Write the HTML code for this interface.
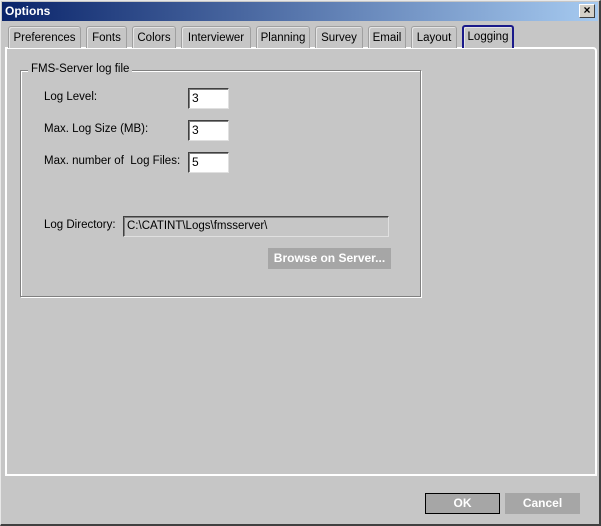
<!DOCTYPE html>
<html><head><meta charset="utf-8"><style>
*{margin:0;padding:0;box-sizing:border-box}
body{width:601px;height:526px;background:#c6c6c6;font-family:"Liberation Sans",sans-serif;font-size:11px;color:#000;position:relative;overflow:hidden}
.a{position:absolute}
#win{left:0;top:0;width:601px;height:526px;border-left:1px solid #e8e8e8;border-top:1px solid #e8e8e8;border-right:2px solid #404040;border-bottom:2px solid #404040}
#title{left:2px;top:2px;width:596px;height:19px;background:linear-gradient(to right,#0a246a,#a6caf0);color:#fff;font-weight:bold;font-size:12px;line-height:19px;padding-left:3px}
#close{left:579px;top:4px;width:16px;height:14px;background:#d4d0c8;border:1px solid;border-color:#fff #404040 #404040 #fff;font-size:12px;font-weight:bold;line-height:11px;text-align:center;color:#000}
.tab{top:26px;height:22px;border:1px solid #a0a0a0;border-bottom:none;border-radius:3px 3px 0 0;text-align:center;line-height:22px;font-size:11.5px;color:#000;background:#c6c6c6;box-shadow:inset 1px 1px 0 #e4e4e4}
.sel{border:2px solid #1a1a8a;border-bottom:none;top:25px;height:23px;z-index:3}
#panel{left:5px;top:47px;width:592px;height:429px;border:2px solid #fff;border-radius:4px 4px 0 0;border-top-left-radius:0}
#grp{left:20px;top:70px;width:401px;height:227px;border:1px solid #808080;box-shadow:1px 1px 0 #fff,inset 1px 1px 0 #fff}
#grpl{left:28px;top:63px;background:#c6c6c6;padding:0 3px;font-size:11.5px}
.lbl{left:44px;font-size:11.5px}
.in{left:188px;width:41px;height:21px;background:#fff;border:1px solid;border-color:#404040 #e0e0e0 #e0e0e0 #404040;box-shadow:inset 1px 1px 0 #808080;padding-left:3px;line-height:19px;font-size:12px}
.btn{background:#a6a6a6;color:#fff;font-weight:bold;text-align:center;font-size:12px}
</style></head><body>
<div class="a" id="win"></div>
<div class="a" id="title">Options</div>
<div class="a" id="close">×</div>
<div class="a" id="panel"></div>
<div class="a tab" style="left:8px;width:73px">Preferences</div>
<div class="a tab" style="left:86px;width:41px">Fonts</div>
<div class="a tab" style="left:132px;width:44px">Colors</div>
<div class="a tab" style="left:181px;width:70px">Interviewer</div>
<div class="a tab" style="left:256px;width:54px">Planning</div>
<div class="a tab" style="left:315px;width:48px">Survey</div>
<div class="a tab" style="left:368px;width:38px">Email</div>
<div class="a tab" style="left:411px;width:46px">Layout</div>
<div class="a tab sel" style="left:462px;width:52px;line-height:21px">Logging</div>
<div class="a" id="grp"></div>
<div class="a" id="grpl">FMS-Server log file</div>
<div class="a lbl" style="top:91px">Log Level:</div>
<div class="a lbl" style="top:123px">Max. Log Size (MB):</div>
<div class="a lbl" style="top:155px">Max. number of &nbsp;Log Files:</div>
<div class="a in" style="top:88px">3</div>
<div class="a in" style="top:120px">3</div>
<div class="a in" style="top:152px">5</div>
<div class="a lbl" style="top:219px">Log Directory:</div>
<div class="a in" style="left:123px;top:216px;width:266px;background:#c6c6c6;font-size:11.5px">C:\CATINT\Logs\fmsserver\</div>
<div class="a btn" style="left:268px;top:248px;width:123px;height:21px;line-height:21px">Browse on Server...</div>
<div class="a btn" style="left:425px;top:493px;width:75px;height:21px;line-height:19px;border:1px solid #000">OK</div>
<div class="a btn" style="left:505px;top:493px;width:75px;height:21px;line-height:21px">Cancel</div>
</body></html>
